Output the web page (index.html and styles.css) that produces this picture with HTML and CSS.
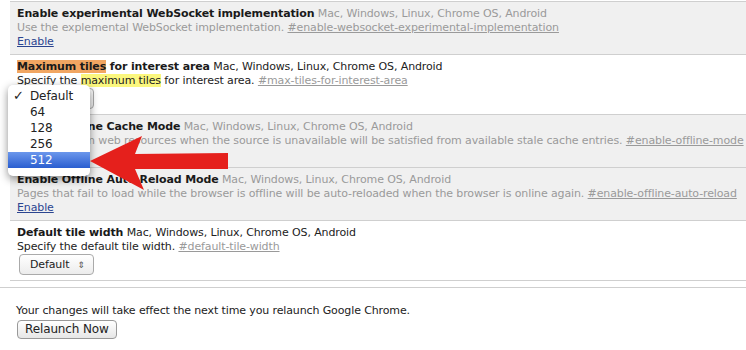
FILE: index.html
```html
<!DOCTYPE html>
<html lang="en">
<head>
    <meta charset="UTF-8">
    <title>Flags</title>
    <link rel="stylesheet" href="styles.css">
</head>
<body>
    <div class="flags">
        <!-- unsupported experiment -->
        <div class="flag off">
            <div class="title"><b>Enable experimental WebSocket implementation</b> Mac, Windows, Linux, Chrome OS, Android</div>
            <div class="desc">Use the explemental WebSocket implementation. <a class="ref" href="#">#enable-websocket-experimental-implementation</a></div>
            <a class="toggle" href="#">Enable</a>
        </div>

        <div class="flag">
            <div class="title"><b><span class="hit">Maximum tiles</span> for interest area</b> Mac, Windows, Linux, Chrome OS, Android</div>
            <div class="desc">Specify the <span class="mark">maximum tiles</span> for interest area. <a class="ref" href="#">#max-tiles-for-interest-area</a></div>
            <div class="select">Default <span class="updown">&#8661;</span></div>
        </div>

        <div class="flag off">
            <div class="title"><b>Enable Offline Cache Mode</b> Mac, Windows, Linux, Chrome OS, Android</div>
            <div class="desc">Readings from web resources when the source is unavailable will be satisfied from available stale cache entries. <a class="ref" href="#">#enable-offline-mode</a></div>
            <a class="toggle" href="#">Enable</a>
        </div>

        <div class="flag off">
            <div class="title"><b>Enable Offline Auto-Reload Mode</b> Mac, Windows, Linux, Chrome OS, Android</div>
            <div class="desc">Pages that fail to load while the browser is offline will be auto-reloaded when the browser is online again. <a class="ref" href="#">#enable-offline-auto-reload</a></div>
            <a class="toggle" href="#">Enable</a>
        </div>

        <div class="flag">
            <div class="title"><b>Default tile width</b> Mac, Windows, Linux, Chrome OS, Android</div>
            <div class="desc">Specify the default tile width. <a class="ref" href="#">#default-tile-width</a></div>
            <div class="select">Default <span class="updown">&#8661;</span></div>
        </div>
    </div>

    <div class="relaunch">
        <div>Your changes will take effect the next time you relaunch Google Chrome.</div>
        <div class="button">Relaunch Now</div>
    </div>

    <!-- open dropdown of the max tiles select -->
    <div class="menu">
        <div class="item"><span class="check">&#10003;</span>Default</div>
        <div class="item">64</div>
        <div class="item">128</div>
        <div class="item">256</div>
        <div class="item picked">512</div>
    </div>

    <svg class="arrow" width="150" height="56" viewBox="0 0 150 56">
        <polygon points="0,25 52,0 45,18 138,17 138,33 45,33 54,54" fill="#e5201c"/>
    </svg>
</body>
</html>
```

FILE: styles.css
```css
body {
    margin: 0;
    padding-top: 1px;
    background: #fff;
    font-family: "DejaVu Sans", Arial, sans-serif;
    font-size: 11px;
    line-height: 14px;
    letter-spacing: -0.12px;
    color: #222;
    position: relative;
    overflow: hidden;
}
.flags {
    margin-left: 10px;
    border-top: 1px solid #cfcfcf;
}
.flag {
    padding: 5px 7px;
    border-bottom: 1px solid #cfcfcf;
    white-space: nowrap;
}
.flag b {
    color: #1a1a1a;
}
.off {
    background-color: #f0f0f0;
    color: #9a9a9a;
}
.ref {
    color: #9a9a9a;
    text-decoration: underline;
}
.toggle {
    color: #2b4590;
    text-decoration: underline;
}
.hit {
    background-color: #f1a662;
}
.mark {
    background-color: #fbf77e;
}
.select {
    display: inline-flex;
    align-items: center;
    gap: 8px;
    height: 19px;
    margin-left: 2px;
    padding: 0 8px 0 10px;
    border: 1px solid #aaa;
    border-radius: 4px;
    background: linear-gradient(#fff, #ececec);
}
.updown {
    font-size: 9px;
    color: #555;
}
.relaunch {
    margin-top: 6px;
    padding: 16px 16px;
    border-top: 1px solid #cfcfcf;
}
.button {
    display: inline-block;
    margin: 2px 0 0 1px;
    padding: 1px 7px;
    border: 1px solid #999;
    border-radius: 4px;
    background: linear-gradient(#fff, #e6e6e6);
    font-size: 12px;
    line-height: 15px;
}
.menu {
    position: absolute;
    left: 8px;
    top: 85px;
    width: 82px;
    padding: 3px 0 8px;
    background: #fff;
    border-radius: 5px;
    box-shadow: 0 3px 9px rgba(0, 0, 0, 0.45);
    font-size: 12px;
    line-height: 16px;
}
.item {
    padding-left: 22px;
    position: relative;
}
.check {
    position: absolute;
    left: 5px;
    font-size: 13px;
}
.picked {
    background: linear-gradient(#6b97ec, #2a5ed0);
    color: #fff;
}
.arrow {
    position: absolute;
    left: 90px;
    top: 136px;
}
```
